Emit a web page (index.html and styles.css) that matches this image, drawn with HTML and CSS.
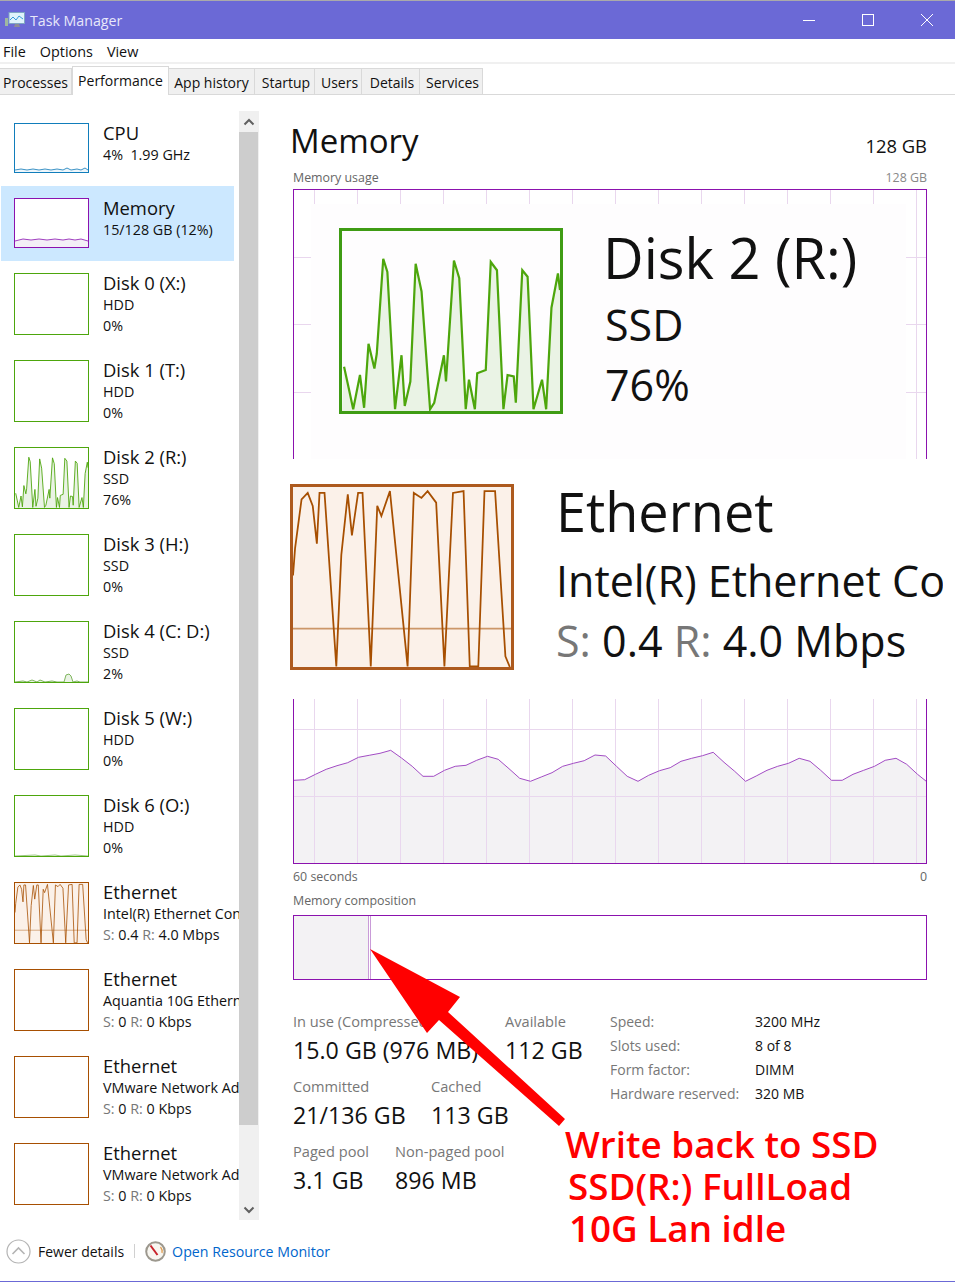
FILE: index.html
```html
<!DOCTYPE html>
<html lang="en">
<head>
    <meta charset="UTF-8">
    <meta name="viewport" content="width=device-width, initial-scale=1.0">
    <title>Task Manager</title>
    <link rel="stylesheet" href="styles.css">
</head>
<body>
    <svg class="defs" width="0" height="0">
        <symbol id="disk-wave" viewBox="0 0 74 61" preserveAspectRatio="none">
            <polygon fill="#eaf3e5" stroke="none" points="0,61 0.7,46 2.4,53.8 3.8,60.4 6.1,48.8 7.5,59.9 9,38.2 11,46.6 11.8,41.6 14,9.4 15.4,13.9 18,60.4 20.2,42.1 21.3,59.3 23.2,51 25,11.1 27,20.5 29.9,60.4 31.3,58.2 34.6,42.1 35.3,51 38,10 39.8,16 42,60.4 43.1,50.4 45.1,60.4 45.9,48.2 48.8,47.1 50.5,10.5 52.6,13.3 54.8,60.4 56.2,48.8 58.3,49.3 59,58.2 61.2,13.3 63,15.5 65,60.4 67.9,50.4 69.3,60.4 71.1,26 73.3,14.4 74,20 74,61"/>
            <polyline fill="none" points="0.7,46 2.4,53.8 3.8,60.4 6.1,48.8 7.5,59.9 9,38.2 11,46.6 11.8,41.6 14,9.4 15.4,13.9 18,60.4 20.2,42.1 21.3,59.3 23.2,51 25,11.1 27,20.5 29.9,60.4 31.3,58.2 34.6,42.1 35.3,51 38,10 39.8,16 42,60.4 43.1,50.4 45.1,60.4 45.9,48.2 48.8,47.1 50.5,10.5 52.6,13.3 54.8,60.4 56.2,48.8 58.3,49.3 59,58.2 61.2,13.3 63,15.5 65,60.4 67.9,50.4 69.3,60.4 71.1,26 73.3,14.4 74,20"/>
        </symbol>
        <symbol id="net-wave" viewBox="0 0 74 61" preserveAspectRatio="none">
            <rect width="74" height="61" fill="#fbf1e9" stroke="none"/>
            <line x1="0" y1="48" x2="74" y2="48" opacity="0.55"/>
            <polyline fill="none" points="0,30 0.7,20.8 2.9,4.2 5,2 6.7,6.4 8.1,19.2 9,2 10.7,2 14.7,60.8 16.4,23 18.6,2.5 20,16.4 22.1,2 23.6,2 26.4,60.8 28.6,6.4 30,9.8 32.9,1.4 38.9,60.8 41,2 43.6,3.7 45.7,1.4 48.6,5.3 51.4,60.8 54.3,2 57.9,1.4 60,60.8 62.9,60.8 65,1.4 68.6,1.4 72.1,57.4 73.6,61"/>
        </symbol>
    </svg>

    <div class="window">
        <div class="titlebar">
            <svg class="app-icon" viewBox="0 0 20 16">
                <rect x="0" y="6" width="3" height="8" fill="#9fb7a0"/>
                <rect x="4" y="0.5" width="15.5" height="11" fill="#dff3fb" stroke="#7fa6c4"/>
                <polyline points="5,8 8,5 11,8 14,4 18,7" fill="none" stroke="#3a9ad9" stroke-width="1"/>
                <path d="M10 12h4l1 3h-6z" fill="#8d8d96"/>
            </svg>
            <span class="app-name">Task Manager</span>
            <div class="win-buttons">
                <span class="win-btn"><svg width="12" height="12" viewBox="0 0 12 12"><path d="M0 6.5h12" stroke="#fff"/></svg></span>
                <span class="win-btn"><svg width="12" height="12" viewBox="0 0 12 12"><rect x="0.5" y="0.5" width="11" height="11" fill="none" stroke="#fff"/></svg></span>
                <span class="win-btn"><svg width="12" height="12" viewBox="0 0 12 12"><path d="M0 0l12 12M12 0L0 12" stroke="#fff"/></svg></span>
            </div>
        </div>

        <div class="menubar">
            <span>File</span>
            <span>Options</span>
            <span>View</span>
        </div>

        <div class="tabs">
            <div class="tab tab-processes">Processes</div>
            <div class="tab tab-performance active">Performance</div>
            <div class="tab tab-history">App history</div>
            <div class="tab tab-startup">Startup</div>
            <div class="tab tab-users">Users</div>
            <div class="tab tab-details">Details</div>
            <div class="tab tab-services">Services</div>
        </div>

        <div class="content">
            <div class="sidebar">
                <div class="device-list">
                    <div class="device short">
                        <div class="thumb cpu">
                            <svg viewBox="0 0 73 48" preserveAspectRatio="none">
                                <polygon fill="#eef6fb" points="0,46 6,45 12,46 18,45 24,46 30,45 36,46 42,45 48,46 52,44 56,46 62,45 66,46 70,44 73,46 73,48 0,48"/>
                                <polyline fill="none" stroke="#3c93c6" points="0,46 6,45 12,46 18,45 24,46 30,45 36,46 42,45 48,46 52,44 56,46 62,45 66,46 70,44 73,46"/>
                            </svg>
                        </div>
                        <div class="device-text">
                            <div class="device-name">CPU</div>
                            <div class="device-sub">4%&nbsp; 1.99 GHz</div>
                        </div>
                    </div>
                    <div class="device short selected">
                        <div class="thumb memory">
                            <svg viewBox="0 0 73 48" preserveAspectRatio="none">
                                <polygon fill="#f3eff6" points="0,42 8,40 16,41 24,40 32,41 40,40 48,41 54,40 60,41 66,40 73,42 73,48 0,48"/>
                                <polyline fill="none" stroke="#a03fc0" points="0,42 8,40 16,41 24,40 32,41 40,40 48,41 54,40 60,41 66,40 73,42"/>
                            </svg>
                        </div>
                        <div class="device-text">
                            <div class="device-name">Memory</div>
                            <div class="device-sub">15/128 GB (12%)</div>
                        </div>
                    </div>
                    <div class="device">
                        <div class="thumb disk"></div>
                        <div class="device-text">
                            <div class="device-name">Disk 0 (X:)</div>
                            <div class="device-sub">HDD</div>
                            <div class="device-sub">0%</div>
                        </div>
                    </div>
                    <div class="device">
                        <div class="thumb disk"></div>
                        <div class="device-text">
                            <div class="device-name">Disk 1 (T:)</div>
                            <div class="device-sub">HDD</div>
                            <div class="device-sub">0%</div>
                        </div>
                    </div>
                    <div class="device">
                        <div class="thumb disk">
                            <svg class="wave-green"><use href="#disk-wave"/></svg>
                        </div>
                        <div class="device-text">
                            <div class="device-name">Disk 2 (R:)</div>
                            <div class="device-sub">SSD</div>
                            <div class="device-sub">76%</div>
                        </div>
                    </div>
                    <div class="device">
                        <div class="thumb disk"></div>
                        <div class="device-text">
                            <div class="device-name">Disk 3 (H:)</div>
                            <div class="device-sub">SSD</div>
                            <div class="device-sub">0%</div>
                        </div>
                    </div>
                    <div class="device">
                        <div class="thumb disk">
                            <svg viewBox="0 0 73 60" preserveAspectRatio="none">
                                <polyline fill="#eaf3e5" stroke="#7fb55e" points="0,60 8,59 12,60 17,58 22,60 25,58 30,60 37,59 42,60 49,60 51,53 54,52 56,54 58,60 62,59 65,60 73,60"/>
                            </svg>
                        </div>
                        <div class="device-text">
                            <div class="device-name">Disk 4 (C: D:)</div>
                            <div class="device-sub">SSD</div>
                            <div class="device-sub">2%</div>
                        </div>
                    </div>
                    <div class="device">
                        <div class="thumb disk"></div>
                        <div class="device-text">
                            <div class="device-name">Disk 5 (W:)</div>
                            <div class="device-sub">HDD</div>
                            <div class="device-sub">0%</div>
                        </div>
                    </div>
                    <div class="device">
                        <div class="thumb disk">
                            <svg viewBox="0 0 73 60" preserveAspectRatio="none">
                                <polyline fill="none" stroke="#9cc783" points="0,60 20,59 26,60 40,59 46,60 60,59 73,60"/>
                            </svg>
                        </div>
                        <div class="device-text">
                            <div class="device-name">Disk 6 (O:)</div>
                            <div class="device-sub">HDD</div>
                            <div class="device-sub">0%</div>
                        </div>
                    </div>
                    <div class="device">
                        <div class="thumb net">
                            <svg class="wave-orange"><use href="#net-wave"/></svg>
                        </div>
                        <div class="device-text">
                            <div class="device-name">Ethernet</div>
                            <div class="device-sub">Intel(R) Ethernet Connection</div>
                            <div class="device-sub"><span class="dim">S:</span> 0.4 <span class="dim">R:</span> 4.0 Mbps</div>
                        </div>
                    </div>
                    <div class="device">
                        <div class="thumb net"></div>
                        <div class="device-text">
                            <div class="device-name">Ethernet</div>
                            <div class="device-sub">Aquantia 10G Ethernet</div>
                            <div class="device-sub"><span class="dim">S:</span> 0 <span class="dim">R:</span> 0 Kbps</div>
                        </div>
                    </div>
                    <div class="device">
                        <div class="thumb net"></div>
                        <div class="device-text">
                            <div class="device-name">Ethernet</div>
                            <div class="device-sub">VMware Network Adapter</div>
                            <div class="device-sub"><span class="dim">S:</span> 0 <span class="dim">R:</span> 0 Kbps</div>
                        </div>
                    </div>
                    <div class="device">
                        <div class="thumb net"></div>
                        <div class="device-text">
                            <div class="device-name">Ethernet</div>
                            <div class="device-sub">VMware Network Adapter</div>
                            <div class="device-sub"><span class="dim">S:</span> 0 <span class="dim">R:</span> 0 Kbps</div>
                        </div>
                    </div>
                </div>
                <div class="scrollbar">
                    <div class="scroll-btn">
                        <svg width="12" height="8" viewBox="0 0 12 8"><path d="M1.5 6.5L6 2l4.5 4.5" fill="none" stroke="#606060" stroke-width="2"/></svg>
                    </div>
                    <div class="scroll-thumb"></div>
                    <div class="scroll-track"></div>
                    <div class="scroll-btn">
                        <svg width="12" height="8" viewBox="0 0 12 8"><path d="M1.5 1.5L6 6l4.5-4.5" fill="none" stroke="#606060" stroke-width="2"/></svg>
                    </div>
                </div>
            </div>

            <div class="main">
                <div class="main-head">
                    <div class="main-title">Memory</div>
                    <div class="main-total">128 GB</div>
                </div>
                <div class="caption-row">
                    <span>Memory usage</span>
                    <span class="caption-right">128 GB</span>
                </div>
                <div class="usage-chart">
                    <svg viewBox="293 189 632 673" preserveAspectRatio="none">
                        <polygon fill="#f3f2f4" points="293,779.3 303.7,778.7 314.5,773.3 325.2,768.3 336,764.7 346.7,761.7 357.5,756.3 368.2,754.3 379,752.3 389.7,749.3 400.5,757 411.2,765.3 422,775.3 432.7,775.3 443.5,769.3 454.2,765.3 465,764.3 475.7,759.3 486.5,755.3 497.2,758.3 508,767.7 518.7,777.3 529.5,780.3 540.2,776 551,771.7 561.7,765.3 572.5,762.3 583.2,759.7 594,754 604.7,755 615.5,765.3 626.2,775.3 637,780.3 647.7,774.3 658.5,769.7 669.2,766.7 680,760.3 690.7,757.3 701.5,754.7 712.2,751.3 723,761.3 733.7,770.3 744.5,780.3 755.2,775 766,769.3 776.7,765.3 787.5,762.3 798.2,757.3 809,760.3 819.7,769.3 830.5,779.3 841.2,779.3 852,773.3 862.7,769.3 873.5,765.3 884.2,759.3 895,757.3 905.7,763.3 916.5,773.3 927,781.7 927,864 293,864"/>
                        <path class="grid-lines" d="M313 189V864M356 189V864M399 189V864M442 189V864M485 189V864M528 189V864M571 189V864M614 189V864M657 189V864M700 189V864M743 189V864M786 189V864M829 189V864M872 189V864M915 189V864M293 256H927M293 323H927M293 391H927M293 458H927M293 526H927M293 593H927M293 661H927M293 728H927M293 795H927"/>
                        <polyline fill="none" stroke="#a24cc4" points="293,779.3 303.7,778.7 314.5,773.3 325.2,768.3 336,764.7 346.7,761.7 357.5,756.3 368.2,754.3 379,752.3 389.7,749.3 400.5,757 411.2,765.3 422,775.3 432.7,775.3 443.5,769.3 454.2,765.3 465,764.3 475.7,759.3 486.5,755.3 497.2,758.3 508,767.7 518.7,777.3 529.5,780.3 540.2,776 551,771.7 561.7,765.3 572.5,762.3 583.2,759.7 594,754 604.7,755 615.5,765.3 626.2,775.3 637,780.3 647.7,774.3 658.5,769.7 669.2,766.7 680,760.3 690.7,757.3 701.5,754.7 712.2,751.3 723,761.3 733.7,770.3 744.5,780.3 755.2,775 766,769.3 776.7,765.3 787.5,762.3 798.2,757.3 809,760.3 819.7,769.3 830.5,779.3 841.2,779.3 852,773.3 862.7,769.3 873.5,765.3 884.2,759.3 895,757.3 905.7,763.3 916.5,773.3 927,781.7"/>
                    </svg>
                </div>
                <div class="caption-row axis-row">
                    <span>60 seconds</span>
                    <span>0</span>
                </div>
                <div class="caption-row composition-label">
                    <span>Memory composition</span>
                </div>
                <div class="composition">
                    <div class="comp-used"></div>
                    <div class="comp-modified"></div>
                </div>
                <div class="stats">
                    <div class="stats-left">
                        <div class="stats-row">
                            <div class="stat stat-inuse">
                                <div class="stat-label">In use (Compressed)</div>
                                <div class="stat-value">15.0 GB (976 MB)</div>
                            </div>
                            <div class="stat">
                                <div class="stat-label">Available</div>
                                <div class="stat-value">112 GB</div>
                            </div>
                        </div>
                        <div class="stats-row">
                            <div class="stat stat-committed">
                                <div class="stat-label">Committed</div>
                                <div class="stat-value">21/136 GB</div>
                            </div>
                            <div class="stat">
                                <div class="stat-label">Cached</div>
                                <div class="stat-value">113 GB</div>
                            </div>
                        </div>
                        <div class="stats-row">
                            <div class="stat stat-paged">
                                <div class="stat-label">Paged pool</div>
                                <div class="stat-value">3.1 GB</div>
                            </div>
                            <div class="stat">
                                <div class="stat-label">Non-paged pool</div>
                                <div class="stat-value">896 MB</div>
                            </div>
                        </div>
                    </div>
                    <div class="spec-grid">
                        <span class="spec-label">Speed:</span><span>3200 MHz</span>
                        <span class="spec-label">Slots used:</span><span>8 of 8</span>
                        <span class="spec-label">Form factor:</span><span>DIMM</span>
                        <span class="spec-label">Hardware reserved:</span><span>320 MB</span>
                    </div>
                </div>
            </div>
        </div>

        <div class="footer">
            <svg class="fewer-icon" width="25" height="25" viewBox="0 0 25 25">
                <circle cx="12.5" cy="12.5" r="11.5" fill="none" stroke="#b4b4b4" stroke-width="1.2"/>
                <path d="M6.5 15L12.5 9l6 6" fill="none" stroke="#b4b4b4" stroke-width="1.6"/>
            </svg>
            <span class="fewer-text">Fewer details</span>
            <span class="footer-sep"></span>
            <svg class="monitor-icon" width="21" height="21" viewBox="0 0 21 21">
                <circle cx="10.5" cy="10.5" r="9.3" fill="#f8f6f0" stroke="#9c988e" stroke-width="2"/>
                <path d="M15.5 6a7 7 0 0 1 1.5 6" fill="none" stroke="#e09a4a" stroke-width="1.2"/>
                <path d="M5.5 4.5L12.5 14" stroke="#c8222a" stroke-width="2"/>
            </svg>
            <span class="monitor-link">Open Resource Monitor</span>
        </div>

        <div class="paste paste-disk">
            <div class="paste-graph disk-graph">
                <svg class="wave-green big"><use href="#disk-wave"/></svg>
            </div>
            <div class="paste-text">
                <div class="paste-name disk-name">Disk 2 (R:)</div>
                <div class="paste-sub">SSD</div>
                <div class="paste-sub">76%</div>
            </div>
        </div>

        <div class="paste paste-net">
            <div class="paste-graph net-graph">
                <svg class="wave-orange big"><use href="#net-wave"/></svg>
            </div>
            <div class="paste-text">
                <div class="paste-name">Ethernet</div>
                <div class="paste-sub">Intel(R) Ethernet Connection</div>
                <div class="paste-sub"><span class="dim">S:</span> 0.4 <span class="dim">R:</span> 4.0 Mbps</div>
            </div>
        </div>

        <svg class="red-arrow" width="955" height="1282" viewBox="0 0 955 1282">
            <polygon fill="#ff0000" points="370,949 460,997 448,1012 565,1119 559,1126 439,1020 427,1033"/>
        </svg>
        <div class="red-note">
            <div class="note-line note-1">Write back to SSD</div>
            <div class="note-line note-2">SSD(R:) FullLoad</div>
            <div class="note-line note-3">10G Lan idle</div>
        </div>
    </div>
</body>
</html>
```

FILE: styles.css
```css
* {
    margin: 0;
    padding: 0;
    box-sizing: border-box;
}

body {
    font-family: "Open Sans", "Noto Sans", Arial, sans-serif;
    font-size: 14px;
    color: #111;
    background: white;
    overflow: hidden;
}

.defs {
    position: absolute;
}

.window {
    position: relative;
    width: 955px;
    height: 1282px;
    display: flex;
    flex-direction: column;
    border-top: 1px solid #aaaaaa;
    border-bottom: 1px solid #6b69d6;
    overflow: hidden;
}

/* title bar */
.titlebar {
    height: 38px;
    flex-shrink: 0;
    background: #6b69d6;
    display: flex;
    align-items: center;
    padding-left: 5px;
}

.app-icon {
    width: 20px;
    height: 16px;
}

.app-name {
    margin-left: 5px;
    color: #e8e8fa;
    font-size: 14.2px;
}

.win-buttons {
    margin-left: auto;
    display: flex;
}

.win-btn {
    width: 59px;
    height: 38px;
    display: flex;
    align-items: center;
    justify-content: center;
    position: relative;
    left: 1px;
}

/* menu + tabs */
.menubar {
    height: 25px;
    flex-shrink: 0;
    display: flex;
    align-items: center;
    gap: 14px;
    padding: 2px 0 0 3px;
    border-bottom: 2px solid #f0f0f0;
    font-size: 14.4px;
}

.tabs {
    height: 31px;
    flex-shrink: 0;
    display: flex;
    align-items: flex-end;
    border-bottom: 1px solid #d9d9d9;
}

.tab {
    height: 26px;
    background: #f0f0f0;
    border: 1px solid #d9d9d9;
    border-left: none;
    border-bottom: none;
    text-align: center;
    line-height: 27px;
    padding-left: 3px;
    white-space: nowrap;
}

.tab.active {
    height: 29px;
    background: white;
    margin-bottom: -1px;
    border-left: 1px solid #d9d9d9;
    line-height: 27px;
    padding-left: 0;
}

.tab-processes { width: 72px; padding-left: 0; }
.tab-performance { width: 97px; }
.tab-history { width: 86px; padding-left: 0; }
.tab-startup { width: 60px; }
.tab-users { width: 47px; }
.tab-details { width: 58px; }
.tab-services { width: 63px; }

.content {
    flex: 1;
    display: flex;
    min-height: 0;
}

/* left column */
.sidebar {
    width: 260px;
    flex-shrink: 0;
    display: flex;
    padding-top: 16px;
    height: 1125px;
}

.device-list {
    width: 239px;
    overflow: hidden;
}

.device {
    height: 87px;
    padding: 12px 0 0 14px;
    display: flex;
    overflow: hidden;
    white-space: nowrap;
}

.device.short {
    height: 75px;
}

.device.selected {
    background: #cce8ff;
    width: 233px;
    margin-left: 1px;
    padding-left: 13px;
}

.thumb {
    width: 75px;
    height: 62px;
    flex-shrink: 0;
    border: 1px solid;
    background: white;
}

.short .thumb {
    height: 50px;
}

.thumb svg {
    display: block;
    width: 100%;
    height: 100%;
}

.thumb.cpu { border-color: #117dbb; }
.thumb.memory { border-color: #8b12ae; }
.thumb.disk { border-color: #4da60c; }
.thumb.net { border-color: #a74f01; }

.wave-green {
    stroke: #4da60c;
    stroke-width: 0.9;
}

.wave-orange {
    stroke: #a74f01;
    stroke-width: 0.8;
}

.device-text {
    margin-left: 14px;
    margin-top: -1px;
}

.device-name {
    font-size: 18.4px;
    line-height: 22px;
}

.device-sub {
    font-size: 14.3px;
    line-height: 21px;
}

.dim {
    color: #777;
}

.scrollbar {
    width: 20px;
    display: flex;
    flex-direction: column;
    height: 1109px;
    background: #f0f0f0;
    border-right: 1px solid #f0f0f0;
}

.scroll-btn {
    height: 21px;
    display: flex;
    align-items: center;
    justify-content: center;
}

.scroll-thumb {
    height: 993px;
    width: 19px;
    background: #cdcdcd;
}

.scroll-track {
    flex: 1;
}

/* right column */
.main {
    flex: 1;
    padding: 20px 28px 0 33px;
}

.main-head {
    height: 50px;
    display: flex;
    justify-content: space-between;
    align-items: baseline;
}

.main-title {
    font-size: 33px;
    line-height: 52px;
    margin-left: -3px;
}

.main-total {
    font-size: 18.4px;
}

.caption-row {
    height: 24px;
    display: flex;
    justify-content: space-between;
    align-items: center;
    font-size: 12.4px;
    color: #666;
}

.caption-right {
    color: #888;
}

.usage-chart {
    height: 675px;
    border: 1px solid #8b12ae;
}

.usage-chart svg {
    display: block;
    width: 100%;
    height: 100%;
}

.grid-lines {
    fill: none;
    stroke: #e9d7ee;
    stroke-width: 1;
    shape-rendering: crispEdges;
}

.axis-row {
    height: 25px;
}

.composition-label {
    height: 26px;
    padding-bottom: 3px;
}

.composition {
    height: 65px;
    border: 1px solid #8b12ae;
    display: flex;
}

.comp-used {
    width: 74px;
    background: #f3f2f4;
}

.comp-modified {
    width: 3px;
    border-left: 1px solid #c99bd8;
    border-right: 1px solid #c99bd8;
}

.stats {
    margin-top: 30px;
    display: flex;
}

.stats-left {
    width: 317px;
    display: flex;
    flex-direction: column;
    gap: 9px;
}

.stats-row {
    display: flex;
}

.stat-inuse { width: 212px; }
.stat-committed { width: 138px; }
.stat-paged { width: 102px; }

.stat-label {
    height: 24px;
    line-height: 22px;
    color: #777;
    font-size: 14.6px;
    white-space: nowrap;
}

.stat-value {
    height: 32px;
    line-height: 32px;
    font-size: 23.2px;
    white-space: nowrap;
}

.spec-grid {
    display: grid;
    grid-template-columns: 145px auto;
    grid-auto-rows: 24px;
    align-items: center;
    margin-top: -1px;
    align-self: flex-start;
}

.spec-label {
    color: #777;
}

/* bottom bar */
.footer {
    height: 61px;
    flex-shrink: 0;
    display: flex;
    align-items: center;
    padding: 1px 0 0 6px;
    margin-top: -1px;
}

.fewer-text {
    margin-left: 7px;
}

.footer-sep {
    width: 1px;
    height: 14px;
    background: #d0d0d0;
    margin: 0 10px 0 10px;
}

.monitor-link {
    margin-left: 6px;
    color: #0066cc;
    font-size: 14.2px;
}

/* pasted pictures lying over the chart */
.paste {
    position: absolute;
    display: flex;
    background: #fefdfe;
    overflow: hidden;
}

.paste-disk {
    left: 311px;
    top: 203px;
    width: 595px;
    height: 255px;
    padding: 24px 0 0 28px;
}

.paste-net {
    left: 265px;
    top: 458px;
    width: 690px;
    height: 240px;
    padding: 25px 12px 0 25px;
    background: white;
}

.paste-graph {
    width: 224px;
    height: 186px;
    flex-shrink: 0;
    border: 3px solid;
}

.paste-graph svg {
    display: block;
    width: 100%;
    height: 100%;
}

.disk-graph { border-color: #3f9c14; }
.net-graph { border-color: #ad5a1e; }

.big.wave-green { stroke-width: 0.75; }
.big.wave-orange { stroke-width: 0.6; }

.paste-text {
    margin-left: 42px;
    white-space: nowrap;
    overflow: hidden;
}

.paste-name {
    font-size: 54px;
    line-height: 71px;
    margin: -8px 0 4px;
}

.disk-name {
    font-size: 56px;
    margin-left: -2px;
    position: relative;
    top: 2px;
}

.paste-sub {
    font-size: 43px;
    line-height: 60px;
}

.red-arrow {
    position: absolute;
    left: 0;
    top: -1px;
    pointer-events: none;
}

.red-note {
    position: absolute;
    left: 565px;
    top: 1122px;
    color: #ff0000;
    font-size: 36.8px;
    font-weight: 600;
    line-height: 42px;
    white-space: nowrap;
}

.note-2 { margin-left: 3px; }
.note-3 { margin-left: 4px; }
```
